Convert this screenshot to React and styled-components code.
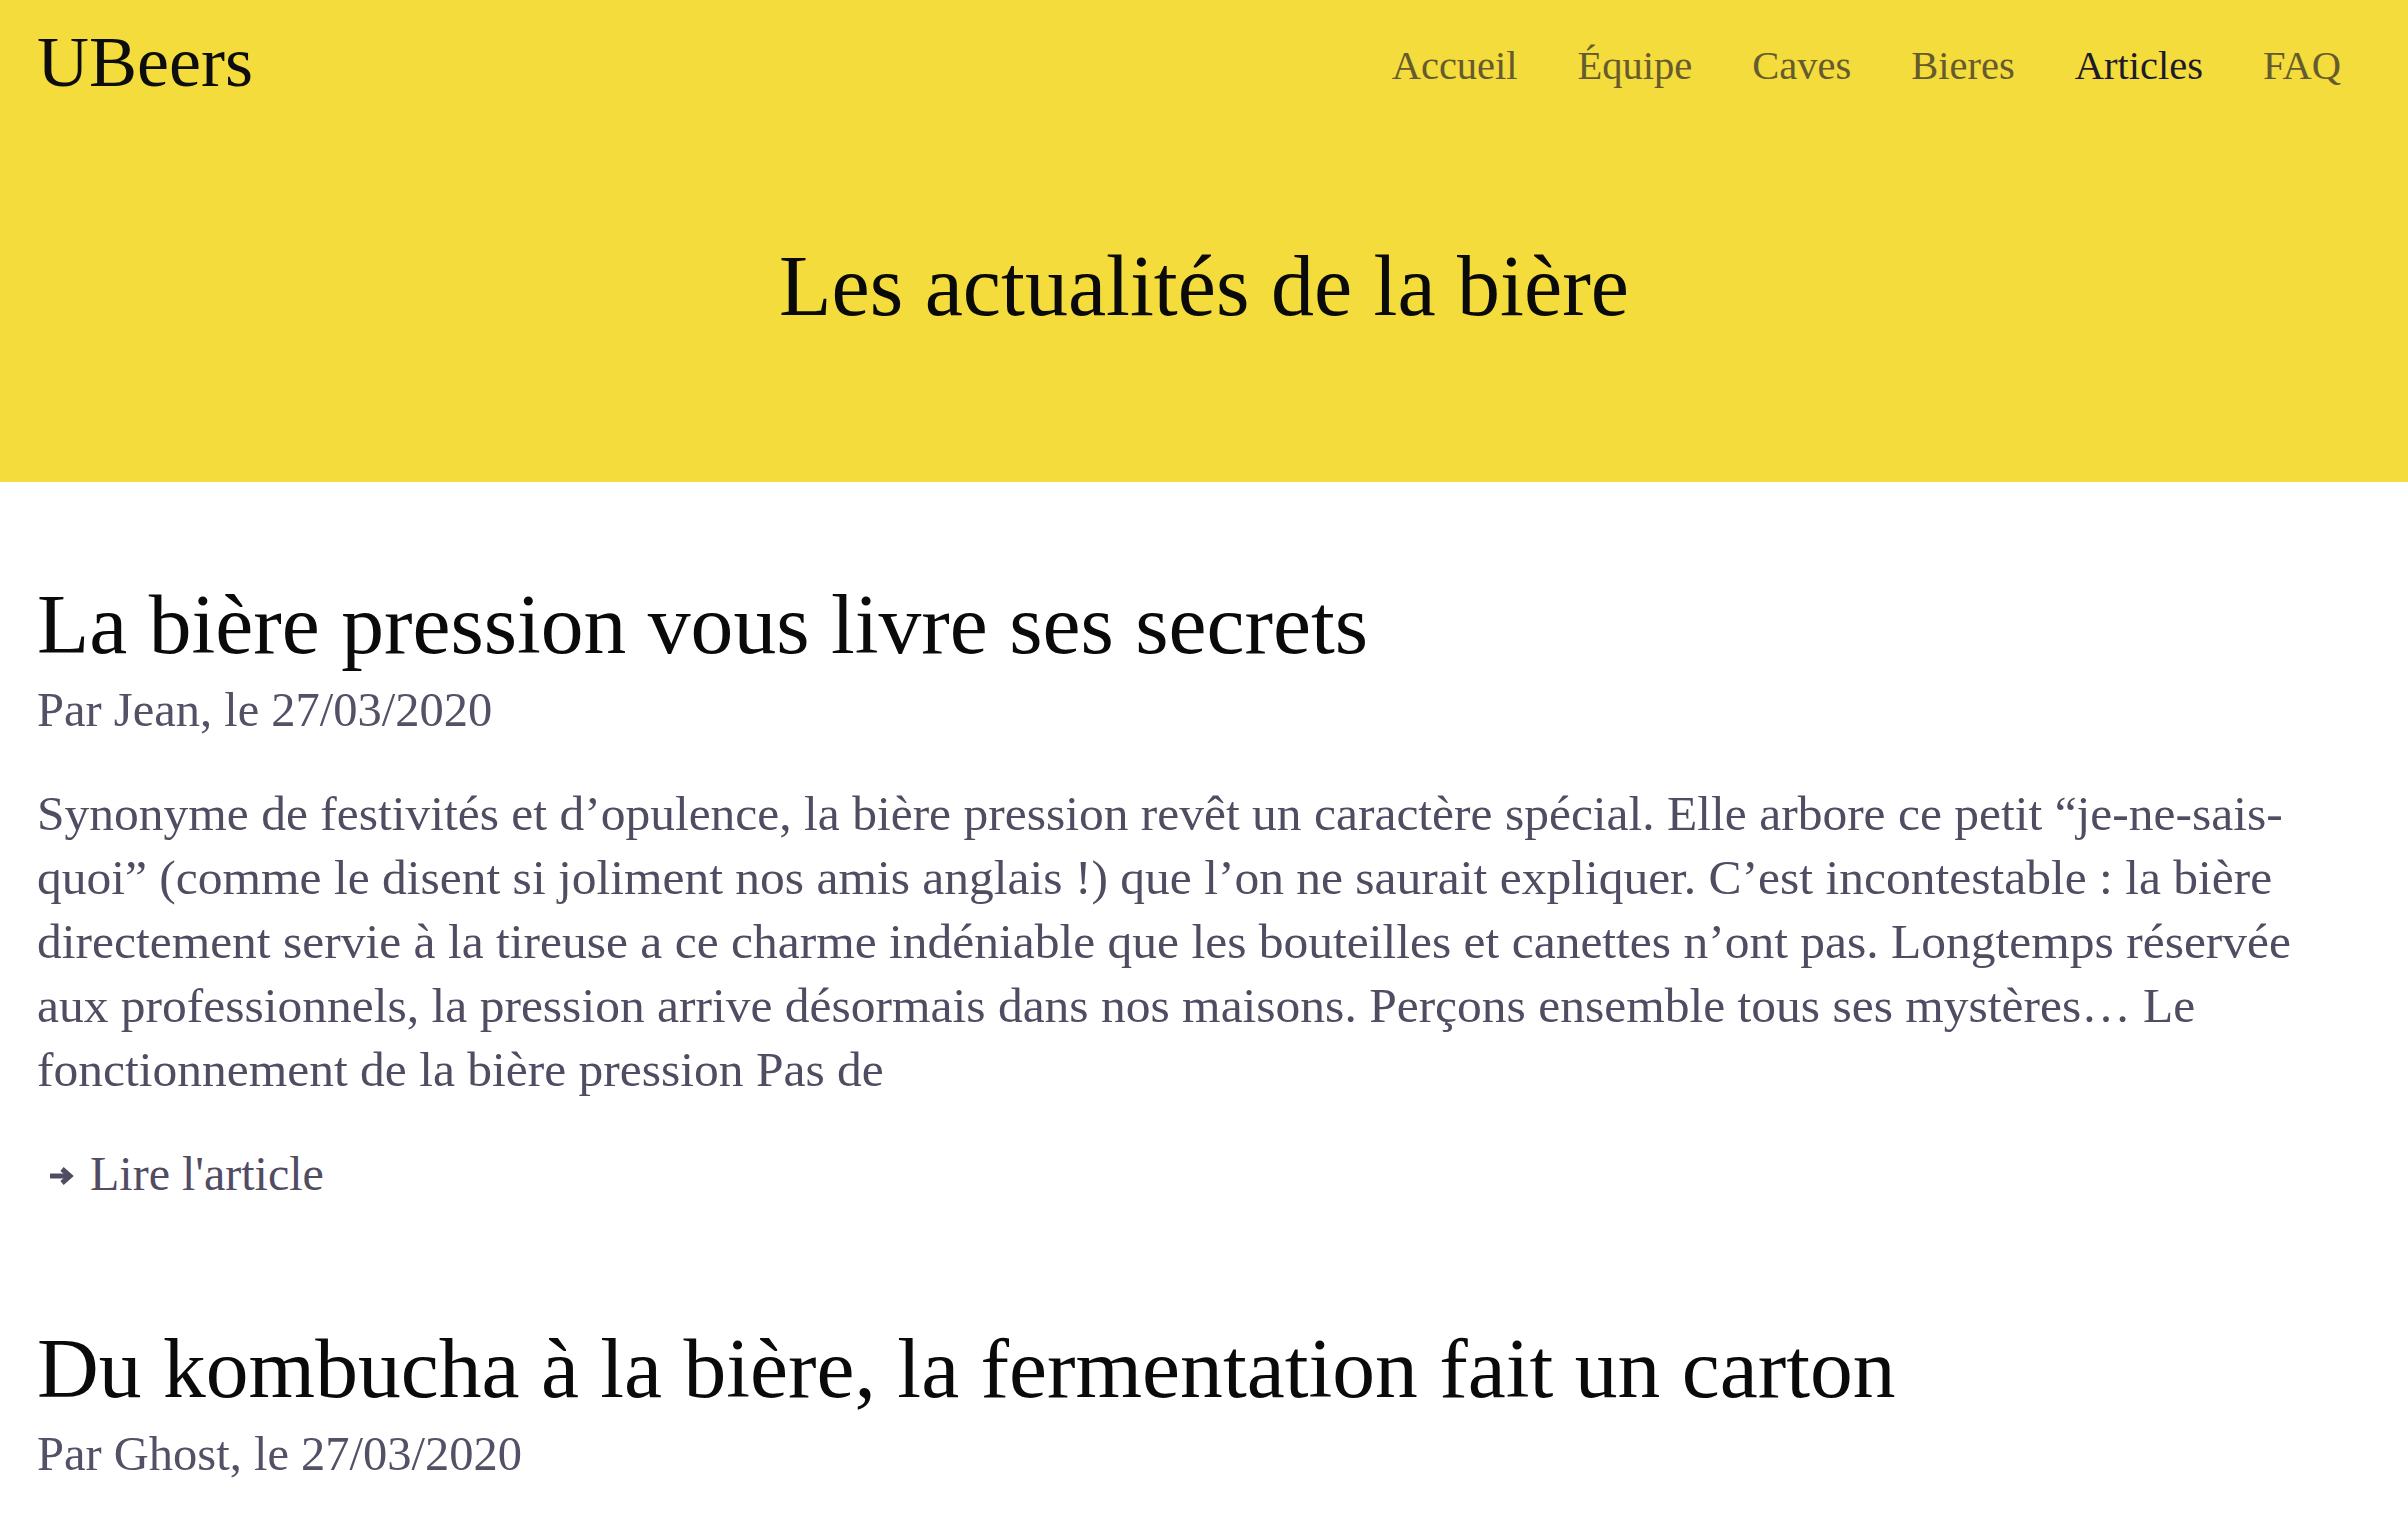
import React from "react";
import styled, { createGlobalStyle } from "styled-components";

const Global = createGlobalStyle`
  html, body { margin: 0; padding: 0; background: #ffffff; }
  body { font-family: "Liberation Serif", "Times New Roman", serif; }
  * { box-sizing: border-box; }
`;

const Header = styled.header`
  background: #f3dc3b;
  padding: 26px 37px 144px;
  display: flex;
  flex-direction: column;
`;

const NavBar = styled.div`
  display: flex;
  justify-content: space-between;
  align-items: flex-start;
`;

const Logo = styled.a`
  font-family: "Liberation Serif", serif;
  font-size: 72px;
  line-height: 72px;
  color: #0d0d0d;
  text-decoration: none;
`;

const NavList = styled.nav`
  display: flex;
  padding-top: 20px;
`;

const NavLink = styled.a`
  font-family: "Liberation Serif", serif;
  font-size: 40.5px;
  line-height: 40px;
  padding: 0 30px;
  color: ${(p) => (p.$active ? "#1d1b2a" : "#655b2e")};
  text-decoration: none;
`;

const HeroTitle = styled.h1`
  margin: 137px 0 0;
  text-align: center;
  font-family: "Liberation Serif", serif;
  font-weight: 400;
  font-size: 86px;
  line-height: 1.2;
  color: #0a0a0a;
`;

const Main = styled.main`
  padding: 92px 37px 0;
  display: flex;
  flex-direction: column;
`;

const Article = styled.article`
  display: flex;
  flex-direction: column;
  & + & { margin-top: 112px; }
`;

const ArticleTitle = styled.h2`
  margin: 0;
  font-family: "Liberation Serif", serif;
  font-weight: 400;
  font-size: 85.6px;
  line-height: 1.2;
  color: #0a0a0a;
`;

const Meta = styled.div`
  margin-top: 5px;
  font-size: 48.5px;
  line-height: 56px;
  color: #545066;
`;

const Excerpt = styled.p`
  margin: 44px 0 0;
  font-size: 49.5px;
  line-height: 64px;
  color: #524c63;
`;

const ReadMore = styled.a`
  margin-top: 40px;
  padding-left: 12px;
  display: inline-flex;
  align-items: center;
  gap: 15px;
  font-size: 48px;
  line-height: 64px;
  color: #524c63;
  text-decoration: none;
  align-self: flex-start;
`;

const Arrow = styled.svg`
  width: 26px;
  height: 20px;
  flex: none;
  margin-top: 4px;
`;

const navItems = ["Accueil", "Équipe", "Caves", "Bieres", "Articles", "FAQ"];

const articles = [
  {
    title: "La bière pression vous livre ses secrets",
    author: "Jean",
    date: "27/03/2020",
    excerpt:
      "Synonyme de festivités et d’opulence, la bière pression revêt un caractère spécial. Elle arbore ce petit “je-ne-sais-quoi” (comme le disent si joliment nos amis anglais !) que l’on ne saurait expliquer. C’est incontestable : la bière directement servie à la tireuse a ce charme indéniable que les bouteilles et canettes n’ont pas. Longtemps réservée aux professionnels, la pression arrive désormais dans nos maisons. Perçons ensemble tous ses mystères… Le fonctionnement de la bière pression Pas de",
  },
  {
    title: "Du kombucha à la bière, la fermentation fait un carton",
    author: "Ghost",
    date: "27/03/2020",
    excerpt:
      "Le kombucha, cette boisson fermentée à base de thé, connaît un succès grandissant. Et la bière n’est pas en reste : la fermentation revient sur le devant de la scène.",
  },
];

export default function App() {
  return (
    <>
      <Global />
      <Header>
        <NavBar>
          <Logo href="#">UBeers</Logo>
          <NavList>
            {navItems.map((n) => (
              <NavLink key={n} href="#" $active={n === "Articles"}>
                {n}
              </NavLink>
            ))}
          </NavList>
        </NavBar>
        <HeroTitle>Les actualités de la bière</HeroTitle>
      </Header>
      <Main>
        {articles.map((a) => (
          <Article key={a.title}>
            <ArticleTitle>{a.title}</ArticleTitle>
            <Meta>
              Par {a.author}, le {a.date}
            </Meta>
            <Excerpt>{a.excerpt}</Excerpt>
            <ReadMore href="#">
              <Arrow viewBox="0 0 26 20">
                <path d="M1 10 H19" stroke="#524c63" strokeWidth="5" fill="none" />
                <path
                  d="M13 3 L21 10 L13 17"
                  stroke="#524c63"
                  strokeWidth="5"
                  fill="none"
                  strokeLinejoin="miter"
                />
              </Arrow>
              Lire l'article
            </ReadMore>
          </Article>
        ))}
      </Main>
    </>
  );
}
